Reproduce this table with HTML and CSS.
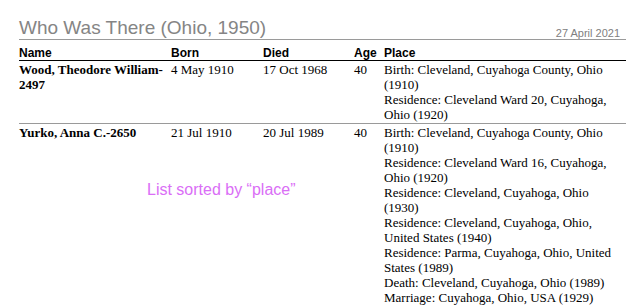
FILE: index.html
```html
<!DOCTYPE html>
<html lang="en">
<head>
<meta charset="utf-8">
<title>Who Was There (Ohio, 1950)</title>
<link rel="stylesheet" href="styles.css">
</head>
<body>
<div class="page">
  <header class="report-head">
    <h1 class="title">Who Was There (Ohio, 1950)</h1>
    <div class="date">27 April 2021</div>
  </header>
  <div class="grid">
    <div class="row head-row">
      <div class="cell">Name</div>
      <div class="cell">Born</div>
      <div class="cell">Died</div>
      <div class="cell">Age</div>
      <div class="cell">Place</div>
    </div>
    <div class="row data-row">
      <div class="cell name">Wood, Theodore William-2497</div>
      <div class="cell">4 May 1910</div>
      <div class="cell">17 Oct 1968</div>
      <div class="cell">40</div>
      <div class="cell places">
        <div>Birth: Cleveland, Cuyahoga County, Ohio (1910)</div>
        <div>Residence: Cleveland Ward 20, Cuyahoga, Ohio (1920)</div>
      </div>
    </div>
    <div class="row data-row">
      <div class="cell name">Yurko, Anna C.-2650</div>
      <div class="cell">21 Jul 1910</div>
      <div class="cell">20 Jul 1989</div>
      <div class="cell">40</div>
      <div class="cell places">
        <div>Birth: Cleveland, Cuyahoga County, Ohio (1910)</div>
        <div>Residence: Cleveland Ward 16, Cuyahoga, Ohio (1920)</div>
        <div>Residence: Cleveland, Cuyahoga, Ohio (1930)</div>
        <div>Residence: Cleveland, Cuyahoga, Ohio, United States (1940)</div>
        <div>Residence: Parma, Cuyahoga, Ohio, United States (1989)</div>
        <div>Death: Cleveland, Cuyahoga, Ohio (1989)</div>
        <div>Marriage: Cuyahoga, Ohio, USA (1929)</div>
      </div>
    </div>
  </div>
  <div class="note">List sorted by “place”</div>
</div>
</body>
</html>
```
FILE: styles.css
```css
html, body {
  margin: 0;
  padding: 0;
  background: #fff;
}
body {
  font-family: "Liberation Serif", "Times New Roman", serif;
  color: #000;
  overflow: hidden;
}
.page {
  position: relative;
  width: 607px;
  margin-left: 19px;
  height: 306px;
}
.report-head {
  display: flex;
  justify-content: space-between;
  align-items: flex-end;
  padding-top: 17px;
  border-bottom: 1px solid #9a9a9a;
}
.title {
  margin: 0;
  font-family: "Liberation Sans", Arial, sans-serif;
  font-weight: normal;
  font-size: 19px;
  line-height: 22px;
  color: #858585;
}
.date {
  font-family: "Liberation Sans", Arial, sans-serif;
  font-size: 11px;
  line-height: 11px;
  color: #808080;
  padding-right: 6px;
}
.row {
  display: grid;
  grid-template-columns: 152px 92px 91px 30px 1fr;
}
.head-row {
  padding-top: 6px;
  border-bottom: 1px solid #000;
  font-family: "Liberation Sans", Arial, sans-serif;
  font-weight: bold;
  font-size: 12px;
  line-height: 14px;
}
.data-row {
  font-size: 13px;
  line-height: 15px;
  padding-top: 1px;
  padding-bottom: 1px;
}
.data-row + .data-row {
  border-top: 1px solid #9a9a9a;
}
.cell {
  padding-right: 3px;
}
.name {
  font-weight: bold;
}
.note {
  position: absolute;
  left: 128px;
  top: 181px;
  font-family: "Liberation Sans", Arial, sans-serif;
  font-size: 16px;
  line-height: 18px;
  color: #da6ef6;
}
```
